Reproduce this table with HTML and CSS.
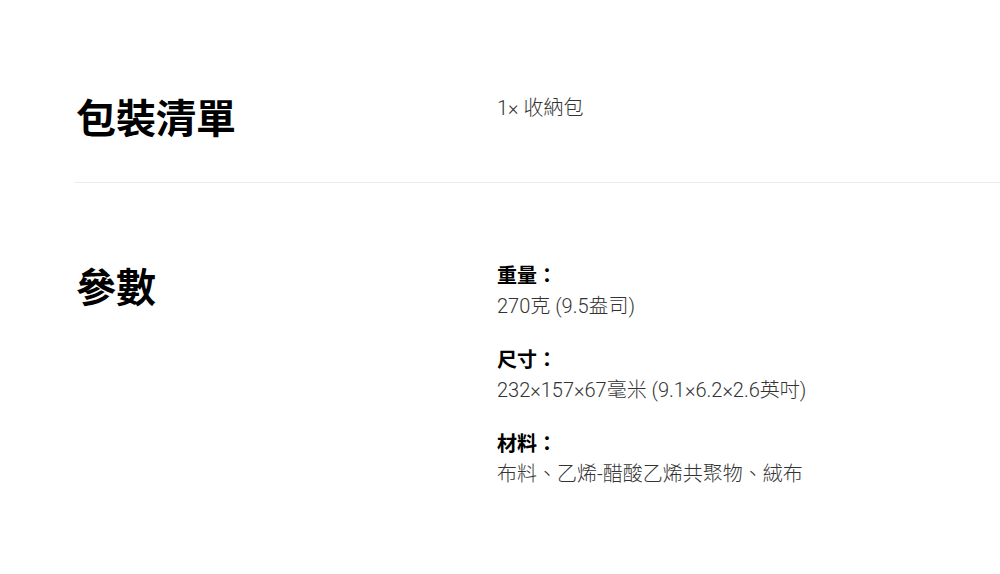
FILE: index.html
```html
<!DOCTYPE html>
<html lang="zh-Hant">
<head>
<meta charset="utf-8">
<link rel="stylesheet" href="styles.css">
</head>
<body>
<div class="specs">
  <section class="row row-first">
    <h2 class="heading">包裝清單</h2>
    <div class="content">
      <p class="value">1× 收納包</p>
    </div>
  </section>
  <section class="row row-second">
    <h2 class="heading">參數</h2>
    <div class="content">
      <div class="item">
        <p class="label">重量：</p>
        <p class="value">270克 (9.5盎司)</p>
      </div>
      <div class="item">
        <p class="label">尺寸：</p>
        <p class="value">232×157×67毫米 (9.1×6.2×2.6英吋)</p>
      </div>
      <div class="item">
        <p class="label">材料：</p>
        <p class="value">布料、乙烯-醋酸乙烯共聚物、絨布</p>
      </div>
    </div>
  </section>
</div>
</body>
</html>
```
FILE: styles.css
```css
html, body {
  margin: 0;
  padding: 0;
  background: #ffffff;
}
body {
  font-family: Roboto, "Noto Sans CJK TC", sans-serif;
  color: #000;
}
.specs {
  padding-left: 74px;
}
.row {
  display: flex;
  align-items: flex-start;
}
.row-first {
  padding-top: 88px;
  padding-bottom: 38px;
  border-bottom: 1px solid #ececec;
}
.row-second {
  padding-top: 74px;
}
.heading {
  width: 423px;
  flex: none;
  margin: 0;
  padding-left: 2px;
  box-sizing: border-box;
  font-family: "Noto Sans CJK TC", sans-serif;
  font-size: 40px;
  line-height: 56px;
  font-weight: 700;
  color: #000;
}
.content {
  display: flex;
  flex-direction: column;
  gap: 24px;
  padding-top: 4px;
}
.row-first .content {
  padding-top: 5px;
}
.item p {
  margin: 0;
}
.value, .label {
  margin: 0;
  font-size: 20px;
  line-height: 30px;
}
.value {
  color: #333;
  font-weight: 300;
}
.label {
  color: #000;
  font-weight: 700;
}
```
